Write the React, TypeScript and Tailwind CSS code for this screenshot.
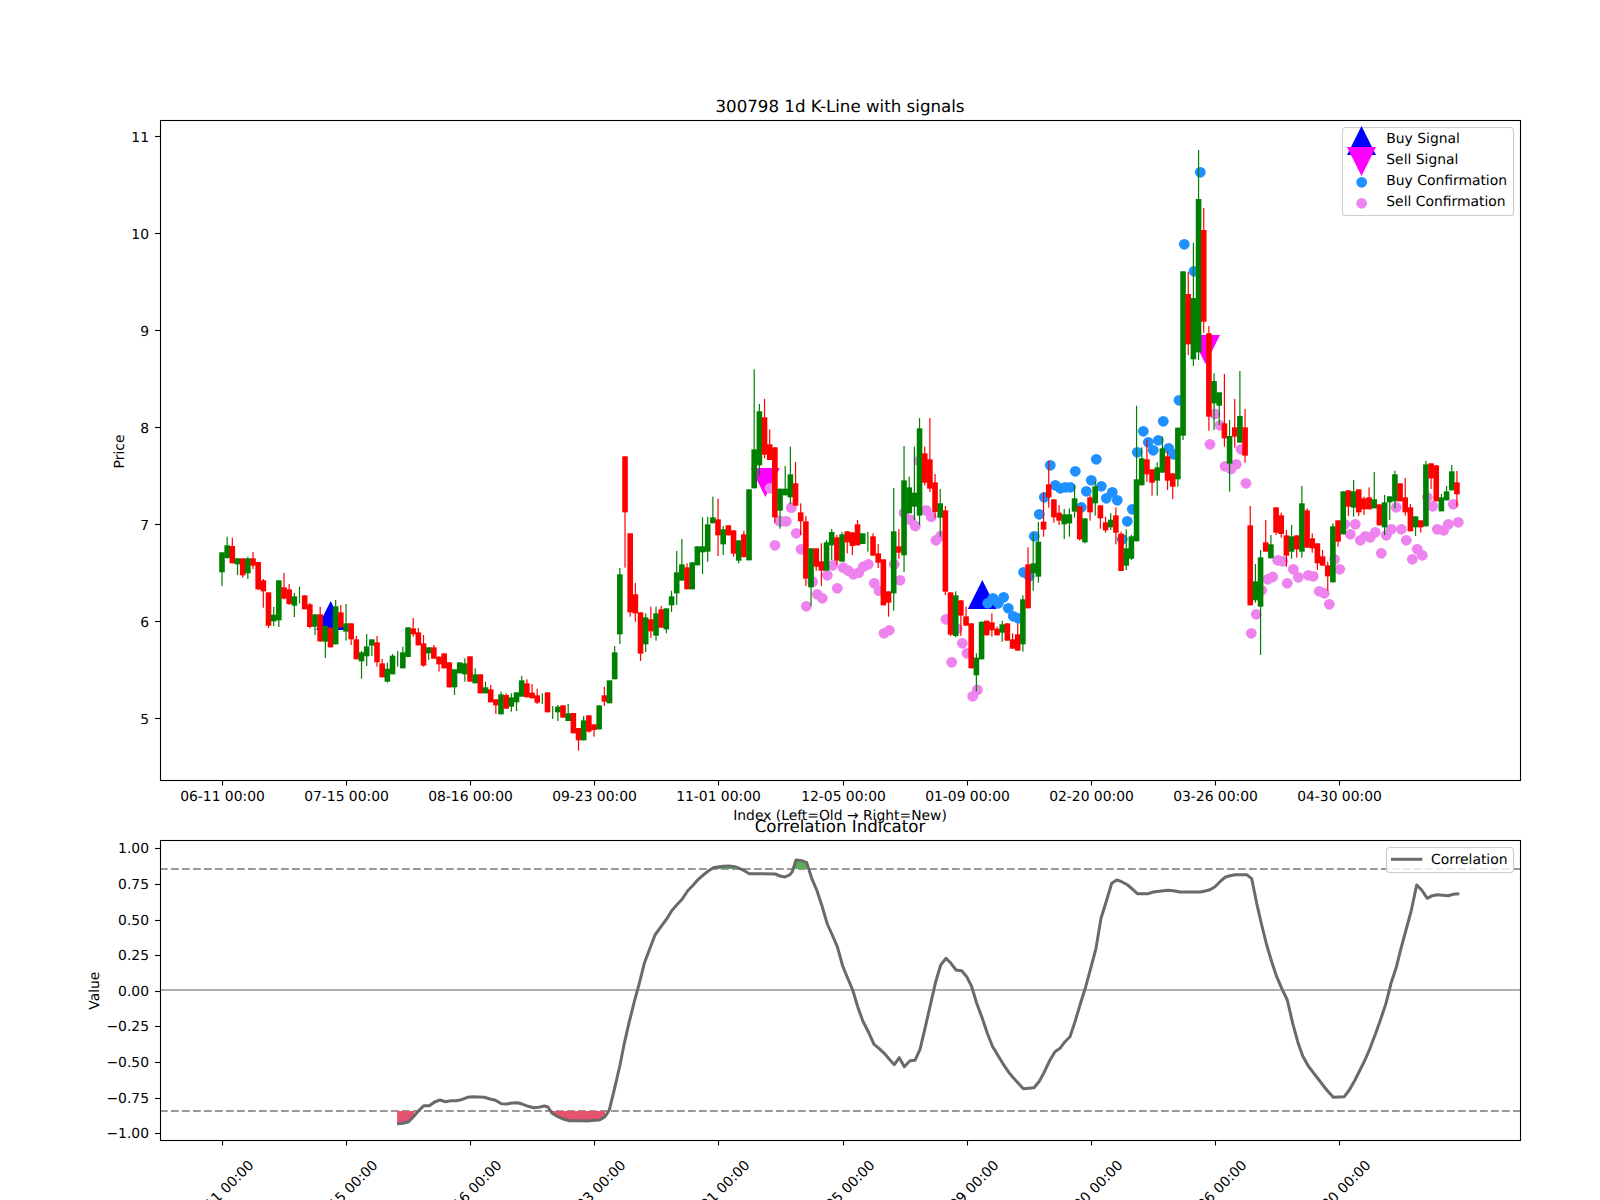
// Candle rows are [colour, bodyTop, bodyBottom, wickTop, wickBottom], 0 = wick ends at the body.
// Values are read at 3x, seg() brings them back to page pixels.
type Row = [string, number, number, number, number];

const seg = (base: number, rows: Row[]) =>
  rows.map(([c, bt, bb, wt, wb]) => ({
    up: c === "g",
    bodyTop: base + bt / 3,
    bodyBottom: base + bb / 3,
    wickTop: base + (wt || bt) / 3,
    wickBottom: base + (wb || bb) / 3,
  }));

const candles = [
  ...seg(400, [
    ["g", 457, 517, 0, 558], ["g", 436, 474, 410, 476], ["r", 438, 490, 413, 0], ["g", 475, 493, 0, 525],
    ["r", 475, 526, 0, 533], ["g", 475, 520, 470, 537], ["r", 475, 497, 456, 507], ["r", 486, 568, 0, 570],
    ["r", 541, 574, 537, 623], ["r", 577, 677, 0, 684], ["g", 644, 664, 621, 678], ["g", 541, 661, 0, 681],
    ["r", 562, 596, 519, 598], ["r", 568, 612, 552, 615], ["g", 589, 617, 579, 651], ["g", 585, 585, 560, 610],
    ["r", 586, 628, 0, 0], ["r", 613, 681, 609, 685], ["g", 643, 680, 0, 705], ["r", 643, 724, 620, 726],
    ["g", 678, 725, 0, 774], ["r", 683, 742, 0, 0], ["g", 619, 733, 600, 0], ["r", 637, 682, 615, 0],
    ["g", 670, 695, 612, 722], ["r", 670, 718, 0, 735], ["r", 718, 778, 708, 0], ["g", 757, 784, 753, 836],
    ["g", 739, 769, 702, 798], ["g", 718, 737, 0, 768], ["r", 727, 787, 708, 800], ["r", 790, 832, 777, 0],
    ["g", 806, 845, 788, 848], ["g", 767, 823, 762, 0], ["g", 775, 775, 753, 800], ["g", 757, 805, 740, 0],
    ["g", 682, 771, 0, 0], ["r", 685, 703, 654, 710], ["r", 697, 736, 684, 0], ["r", 730, 797, 705, 800],
    ["g", 742, 760, 0, 780], ["r", 742, 776, 735, 0], ["r", 770, 793, 0, 815], ["r", 760, 805, 0, 0],
    ["r", 787, 862, 0, 0], ["g", 808, 862, 0, 885], ["g", 787, 820, 0, 0],
    ["g", 790, 823, 775, 845], ["r", 769, 845, 0, 0], ["g", 823, 850, 805, 0], ["r", 823, 880, 0, 0],
    ["g", 862, 880, 845, 0], ["r", 868, 907, 855, 0], ["r", 898, 916, 0, 942], ["g", 883, 943, 875, 0],
    ["r", 885, 926, 880, 0], ["g", 892, 920, 880, 935], ["g", 877, 907, 0, 933], ["g", 841, 890, 828, 0],
    ["r", 850, 892, 838, 0], ["r", 878, 895, 852, 0], ["r", 886, 908, 866, 912], ["g", 895, 895, 880, 912],
    ["r", 877, 937, 0, 0], ["g", 935, 935, 918, 957], ["g", 920, 937, 915, 963], ["r", 916, 953, 0, 0],
    ["g", 940, 963, 912, 0], ["r", 939, 1000, 0, 0], ["r", 984, 1021, 0, 1052], ["g", 961, 1021, 948, 0],
    ["r", 946, 995, 0, 998], ["r", 973, 990, 0, 1010], ["g", 916, 988, 0, 0], ["r", 886, 905, 860, 918],
    ["g", 841, 910, 0, 0], ["g", 757, 838, 738, 0], ["g", 523, 703, 504, 732], ["r", 169, 337, 0, 503],
    ["r", 400, 637, 0, 650], ["r", 583, 640, 549, 665], ["r", 637, 761, 0, 783], ["g", 652, 733, 640, 756],
    ["r", 658, 694, 620, 714], ["g", 640, 707, 620, 722], ["r", 628, 683, 618, 0], ["g", 625, 688, 0, 700],
    ["g", 589, 616, 572, 636], ["g", 517, 580, 453, 615], ["g", 493, 542, 417, 0], ["r", 502, 568, 490, 0],
    ["g", 487, 568, 0, 0], ["g", 439, 496, 0, 0], ["g", 439, 457, 352, 522], ["g", 373, 455, 350, 485],
    ["g", 352, 370, 290, 0], ["r", 358, 406, 296, 468], ["g", 388, 433, 378, 465], ["r", 376, 406, 0, 0],
    ["r", 391, 461, 0, 470], ["g", 421, 482, 0, 490], ["r", 403, 471, 392, 473], ["g", 268, 481, 0, 0],
  ]),
  ...seg(340, [
    ["g", 328, 445, 88, 0], ["g", 214, 376, 192, 408], ["r", 232, 344, 177, 355], ["r", 313, 360, 268, 0],
    ["r", 322, 532, 0, 548], ["g", 446, 512, 0, 566], ["g", 446, 466, 378, 0], ["g", 403, 472, 320, 492],
    ["r", 430, 497, 366, 0], ["r", 517, 544, 490, 585], ["r", 544, 716, 528, 738], ["g", 625, 742, 0, 798],
    ["r", 625, 680, 0, 692], ["r", 664, 692, 610, 738], ["g", 607, 692, 600, 0], ["g", 576, 616, 567, 660],
    ["r", 592, 662, 585, 675], ["g", 583, 665, 576, 0], ["r", 574, 607, 0, 640], ["r", 577, 618, 0, 645],
    ["r", 553, 616, 540, 0], ["g", 580, 612, 0, 0], ["g", 600, 600, 576, 635], ["r", 589, 647, 580, 0],
    ["r", 640, 668, 612, 684], ["r", 658, 796, 0, 0], ["r", 754, 788, 0, 830], ["g", 574, 760, 444, 812],
    ["r", 619, 638, 567, 657], ["g", 421, 646, 318, 696], ["g", 442, 520, 410, 0], ["g", 458, 500, 320, 540],
    ["g", 265, 527, 234, 555], ["r", 340, 428, 320, 436], ["r", 358, 446, 234, 456], ["r", 427, 516, 402, 534],
    ["g", 490, 533, 447, 590], ["r", 511, 755, 498, 765], ["r", 757, 884, 0, 888], ["g", 766, 888, 754, 892],
    ["r", 781, 827, 0, 888], ["r", 829, 857, 800, 0], ["r", 850, 985, 0, 0], ["g", 953, 1006, 940, 1054],
    ["g", 845, 958, 0, 0], ["r", 842, 886, 0, 0], ["r", 847, 871, 820, 890], ["r", 866, 886, 860, 0],
    ["g", 853, 878, 842, 905], ["r", 850, 902, 0, 0], ["r", 898, 926, 880, 0], ["r", 883, 932, 850, 0],
    ["g", 778, 913, 766, 935], ["r", 673, 805, 622, 0], ["g", 670, 700, 580, 752], ["g", 605, 710, 546, 728],
    ["r", 545, 569, 457, 590], ["r", 433, 472, 362, 503], ["r", 478, 532, 0, 548], ["r", 518, 542, 495, 555],
    ["g", 523, 553, 507, 597], ["g", 523, 550, 505, 590], ["g", 475, 515, 435, 533], ["r", 499, 598, 0, 602],
    ["g", 535, 607, 0, 610], ["r", 472, 517, 465, 542], ["g", 439, 490, 423, 527], ["r", 496, 535, 0, 566],
    ["r", 547, 571, 530, 578], ["g", 539, 562, 520, 570], ["r", 526, 578, 502, 613], ["r", 581, 693, 575, 0],
    ["g", 625, 677, 568, 690], ["g", 589, 656, 585, 660], ["g", 418, 604, 197, 0], ["g", 355, 436, 322, 0],
    ["r", 358, 403, 300, 425], ["r", 388, 428, 0, 467], ["g", 382, 422, 367, 467], ["g", 325, 398, 290, 0],
    ["r", 349, 422, 335, 450], ["r", 400, 440, 0, 477], ["g", 263, 418, 0, 440],
  ]),
  ...seg(120, [
    ["g", 454, 947, 0, 960], ["r", 522, 673, 456, 705], ["g", 534, 718, 368, 738], ["g", 237, 697, 90, 720],
    ["r", 330, 605, 264, 638], ["r", 640, 890, 618, 932],
  ]),
  ...seg(340, [
    ["g", 123, 190, 100, 270], ["g", 157, 197, 0, 255], ["r", 250, 295, 102, 320], ["g", 288, 371, 240, 455],
    ["r", 262, 290, 177, 323], ["g", 228, 308, 93, 0], ["r", 262, 347, 207, 368],
  ]),
  ...seg(400, [
    ["r", 376, 616, 318, 0], ["g", 544, 601, 492, 608], ["g", 472, 620, 450, 765], ["r", 427, 455, 360, 0],
    ["g", 433, 475, 405, 0], ["r", 322, 398, 0, 405], ["r", 346, 402, 338, 413], ["r", 406, 467, 390, 500],
    ["g", 409, 455, 375, 476], ["r", 406, 448, 0, 473], ["g", 310, 455, 258, 473], ["r", 331, 443, 325, 0],
    ["r", 415, 445, 400, 458], ["r", 430, 490, 0, 510], ["r", 469, 497, 450, 0], ["r", 496, 529, 485, 572],
    ["g", 379, 547, 370, 0], ["r", 361, 425, 0, 440], ["g", 274, 403, 0, 0], ["r", 271, 320, 0, 348],
    ["g", 274, 323, 240, 350], ["r", 268, 337, 0, 348], ["r", 295, 328, 290, 345], ["r", 292, 328, 262, 0],
    ["g", 298, 325, 216, 0], ["r", 313, 376, 0, 0], ["g", 307, 382, 285, 405], ["g", 289, 307, 0, 360],
    ["g", 223, 304, 212, 325], ["r", 250, 304, 0, 0], ["r", 292, 337, 234, 347], ["r", 322, 394, 312, 0],
    ["g", 349, 382, 0, 408], ["r", 361, 382, 0, 398], ["g", 193, 379, 183, 0], ["r", 190, 235, 0, 267],
    ["r", 196, 304, 0, 0], ["g", 292, 334, 282, 0], ["g", 274, 301, 258, 0], ["g", 214, 271, 195, 0],
    ["r", 247, 283, 213, 320],
  ]),
];

const sellDots = [
  [775, 545.3], [770, 488.3], [779.3, 521], [791.3, 507.7], [781, 521.3], [786.3, 521.3], [796.3, 533.3], [801, 549.3],
  [812.7, 581.7], [817.3, 594.3], [822.3, 598.3], [806.3, 606.3], [827.3, 575.3], [832.7, 565.3], [837.3, 588.3],
  [843.3, 567.7], [848.3, 570.7], [853.3, 574.3], [858.7, 572.7], [863.3, 566.7], [868.3, 564.3], [874.3, 583.3],
  [879, 590.7], [884, 633.3], [889.3, 630.3], [894.3, 564.3], [900, 580.3], [904, 513], [910.7, 520], [915.3, 526],
  [919, 460.7], [926, 510.3], [931.3, 516.7], [936, 540.3], [940.7, 536], [946, 619.3], [957.3, 628.7], [962.3, 643.3],
  [967, 653.3], [951.7, 662.3], [977.3, 690], [972.7, 696.3], [1210, 444.3], [1215, 414], [1220, 425.3], [1225, 466.3],
  [1231, 469], [1236.3, 464.3], [1241, 449.3], [1246, 483.3], [1251.3, 633.3], [1256.3, 614.3], [1261.7, 590.3],
  [1267.7, 579.3], [1272.7, 577], [1277.7, 560.3], [1282.7, 561.3], [1287.3, 583.3], [1293.3, 569.3], [1298.3, 577.3],
  [1308.3, 575.3], [1313.3, 576.3], [1319.3, 591.3], [1324.3, 593.3], [1329.3, 604.3], [1334.7, 559.3], [1339.7, 569.3],
  [1344.7, 524.3], [1350.3, 534.3], [1355.3, 524.3], [1360.3, 540.3], [1365.3, 536.3], [1370.3, 537.3], [1375.3, 532.3],
  [1381.3, 553.3], [1386.3, 535.3], [1391.3, 529.3], [1396.3, 507.3], [1401.3, 529.3], [1406.3, 540.3], [1412.3, 559.3],
  [1417.3, 549.3], [1422.3, 555.3], [1427.3, 497.3], [1432.7, 506.3], [1437.3, 529.3], [1443.7, 530.3], [1448.3, 524.3],
  [1453.3, 504.3], [1458.3, 522.3],
];

const buyDots = [
  [987.7, 603.3], [993, 598.3], [998.3, 603.3], [1003.6, 597.3], [1008.3, 608.3], [1013.3, 616.3], [1018.3, 618.3],
  [1023.6, 572.3], [1029.2, 576.3], [1034.3, 536.3], [1039.3, 514.3], [1044.3, 497.3], [1050.3, 465.3], [1055.3, 485.3],
  [1060.3, 488.3], [1065.3, 487.3], [1070.3, 487.3], [1075.3, 471.3], [1081.3, 507.3], [1086.3, 491.3], [1091.3, 480.3],
  [1096.3, 459.3], [1101.3, 486.3], [1106.3, 498.3], [1112.3, 492.3], [1117.3, 500.3], [1122.3, 539.3], [1127.3, 521.3],
  [1132.3, 509.3], [1137.3, 452.3], [1143.3, 431.3], [1148.3, 442.3], [1153.3, 450.3], [1158.3, 440.3], [1163.3, 421.3],
  [1168.7, 448.3], [1173.7, 454.3], [1179, 400.3], [1184.3, 244.3], [1194, 271.3], [1200.3, 172.3],
];

const curve = [
  ...[
    [888, 1031], [905, 1030], [920, 1025], [935, 1009], [950, 990], [963, 977], [978, 977], [993, 966], [1008, 960],
    [1023, 965], [1038, 962], [1053, 962], [1068, 959], [1085, 952], [1100, 950], [1117, 951], [1132, 952], [1148, 957],
    [1163, 961], [1180, 971], [1195, 972], [1210, 969], [1225, 968], [1240, 973], [1255, 979], [1270, 983], [1285, 982],
    [1300, 978], [1310, 981], [1322, 1000], [1338, 1010], [1355, 1018], [1370, 1022], [1400, 1022], [1420, 1023],
    [1440, 1021], [1455, 1020], [1470, 1010], [1482, 990], [1497, 925],
  ].map(([x, y]) => [80 + x / 2.8, 780 + y / 3]),
  ...[
    [0, 855], [13, 790], [28, 725], [43, 665], [58, 610], [73, 550], [88, 510], [105, 465], [125, 437], [140, 417],
    [155, 392], [170, 375], [187, 357], [203, 332], [220, 315], [235, 298], [250, 285], [265, 273], [280, 263], [297, 260],
    [312, 259], [328, 258], [345, 260], [358, 265], [373, 272], [388, 281], [466, 282], [480, 288], [495, 291], [510, 284],
    [517, 275], [528, 240], [545, 242], [560, 248], [575, 295], [590, 330], [605, 375], [622, 432], [637, 465], [652, 500],
    [668, 558], [683, 595], [698, 630], [713, 680], [728, 722], [745, 755], [762, 793], [777, 805], [793, 820], [808, 838],
    [823, 854], [838, 833], [853, 860], [870, 842], [885, 841], [900, 808], [915, 745], [930, 680], [947, 605], [962, 555],
    [978, 535], [993, 550], [1008, 570], [1025, 572], [1040, 590], [1055, 620], [1070, 670], [1087, 715], [1102, 760],
    [1117, 798], [1133, 825], [1148, 850], [1165, 875], [1180, 893], [1195, 910], [1210, 926], [1242, 923], [1257, 905],
    [1272, 878], [1290, 840], [1305, 815], [1320, 805], [1335, 785], [1350, 770], [1365, 725], [1380, 675], [1397, 620],
    [1412, 565], [1428, 505], [1443, 415], [1460, 360], [1475, 310], [1490, 300],
  ].map(([x, y]) => [620 + x / 3, 780 + y / 3]),
  ...[
    [65, 305], [83, 315], [97, 327], [112, 341], [145, 341], [160, 336], [178, 334], [205, 331], [225, 333], [240, 336],
    [300, 336], [315, 333], [330, 329], [345, 320], [360, 305], [375, 292], [390, 287], [405, 284], [440, 284], [455, 296],
    [470, 370], [485, 435], [500, 495], [515, 545], [530, 590], [545, 625], [562, 660], [578, 730], [593, 785], [608, 828],
    [625, 858], [640, 878], [655, 897], [670, 917], [685, 935], [700, 952], [733, 950], [748, 930], [765, 900], [780, 870],
    [795, 840], [810, 805], [827, 760], [843, 715], [858, 670], [873, 610], [888, 565], [903, 505], [918, 450], [933, 395],
    [950, 315], [965, 330], [982, 355], [997, 347], [1012, 344], [1045, 347], [1060, 343], [1078, 341],
  ].map(([x, y]) => [1100 + x / 3, 780 + y / 3]),
];

const pts = (list: number[][]) => list.map(([x, y]) => `${x.toFixed(1)},${y.toFixed(1)}`).join(" ");
const p7 = (list: number[][]) => pts(list.map(([x, y]) => [80 + x / 2.8, 780 + y / 3]));
const p8 = (list: number[][]) => pts(list.map(([x, y]) => [620 + x / 3, 780 + y / 3]));

const tickX = [222.5, 346.5, 470.5, 594.5, 718.5, 843.5, 967.5, 1091.5, 1215.5, 1339.5];
const tickNames = ["06-11 00:00", "07-15 00:00", "08-16 00:00", "09-23 00:00", "11-01 00:00", "12-05 00:00", "01-09 00:00", "02-20 00:00", "03-26 00:00", "04-30 00:00"];
const priceTicks = [5, 6, 7, 8, 9, 10, 11];
const valueTicks = ["1.00", "0.75", "0.50", "0.25", "0.00", "−0.25", "−0.50", "−0.75", "−1.00"];

const candleX = (i: number) => 222 + 5.167 * i;
const priceY = (p: number) => 525.3 - (p - 7) * 97;

const Up = ({ x, top, size = 14.5 }: { x: number; top: number; size?: number }) => (
  <polygon points={`${x},${top} ${x + size},${top + 29} ${x - size},${top + 29}`} fill="#0000ff" />
);
const Down = ({ x, top, size = 14.5 }: { x: number; top: number; size?: number }) => (
  <polygon points={`${x - size},${top} ${x + size},${top} ${x},${top + 29}`} fill="#ff00ff" />
);

export default function App() {
  return (
    <div className="h-[1200px] w-[1600px] overflow-hidden bg-white">
      <svg
        width="1600"
        height="1200"
        viewBox="0 0 1600 1200"
        textRendering="geometricPrecision"
        className="block fill-black text-[13.89px] [font-family:'DejaVu_Sans',sans-serif]"
      >
        {/* price panel */}
        <text x="840" y="111.7" textAnchor="middle" className="text-[16.67px]">300798 1d K-Line with signals</text>
        <Up x={330.7} top={601} />
        <Up x={982.3} top={580} />
        <Down x={765.4} top={468} />
        <Down x={1205.5} top={335} />
        {sellDots.map(([x, y], i) => <circle key={i} cx={x} cy={y} r="5.4" fill="#ee82ee" />)}
        {buyDots.map(([x, y], i) => <circle key={i} cx={x} cy={y} r="5.4" fill="#1e90ff" />)}
        {candles.map((c, i) => {
          const color = c.up ? "#008000" : "#ff0000";
          const x = candleX(i);
          return (
            <g key={i}>
              <rect x={x - 0.6} y={c.wickTop} width="1.2" height={c.wickBottom - c.wickTop} fill={color} />
              {c.bodyBottom > c.bodyTop && (
                <rect x={x - 2.8} y={c.bodyTop} width="5.6" height={c.bodyBottom - c.bodyTop} fill={color} />
              )}
            </g>
          );
        })}
        <rect x="160.5" y="120.5" width="1360" height="660" fill="none" stroke="#000" strokeWidth="1.1" />
        {tickX.map((x, i) => (
          <g key={i}>
            <line x1={x} x2={x} y1="781" y2="785.5" stroke="#000" strokeWidth="1.1" />
            <text x={x} y="800.7" textAnchor="middle">{tickNames[i]}</text>
          </g>
        ))}
        {priceTicks.map((p) => (
          <g key={p}>
            <line x1="155" x2="160" y1={Math.round(priceY(p)) - 0.5} y2={Math.round(priceY(p)) - 0.5} stroke="#000" strokeWidth="1.1" />
            <text x="149" y={priceY(p) + 5} textAnchor="end">{p}</text>
          </g>
        ))}
        <text transform="translate(124 451.5) rotate(-90)" textAnchor="middle">Price</text>
        <text x="840" y="820" textAnchor="middle">Index (Left=Old → Right=New)</text>

        {/* legend of the price panel */}
        <rect x="1342.5" y="127.5" width="171" height="88" rx="3" fill="#ffffff" fillOpacity="0.8" stroke="#cccccc" strokeWidth="1.1" />
        <Up x={1361.5} top={126} />
        <Down x={1361.5} top={147} />
        <circle cx="1361.7" cy="182.3" r="5.4" fill="#1e90ff" />
        <circle cx="1361.7" cy="203.3" r="5.4" fill="#ee82ee" />
        <text x="1386.3" y="143">Buy Signal</text>
        <text x="1386.3" y="164">Sell Signal</text>
        <text x="1386.3" y="185">Buy Confirmation</text>
        <text x="1386.3" y="206">Sell Confirmation</text>

        {/* correlation panel */}
        <text x="840" y="831.7" textAnchor="middle" className="text-[16.67px]">Correlation Indicator</text>
        <line x1="160" x2="1520" y1="869" y2="869" stroke="#999999" strokeWidth="2" strokeDasharray="7.7 3.3" />
        <line x1="160" x2="1520" y1="1111" y2="1111" stroke="#999999" strokeWidth="2" strokeDasharray="7.7 3.3" />
        <line x1="160" x2="1520" y1="990" y2="990" stroke="#b0b0b0" strokeWidth="2" />
        <polygon fill="#e5536f" points={p7([[888, 993], [937, 993], [935, 1009], [920, 1025], [905, 1030], [888, 1031]])} />
        <polygon
          fill="#e5536f"
          points={p7([[1322, 993], [1470, 993], [1470, 1010], [1455, 1020], [1440, 1021], [1420, 1023], [1400, 1022], [1370, 1022], [1355, 1018], [1338, 1010], [1322, 1000]])}
        />
        <polygon fill="#5cad5c" points={p8([[517, 267], [565, 267], [560, 248], [545, 242], [528, 240]])} />
        <polygon fill="#5cad5c" points={p8([[275, 267], [345, 267], [328, 258], [297, 260]])} />
        <polyline points={pts(curve)} fill="none" stroke="#6a6a6a" strokeWidth="3" strokeLinejoin="round" />
        <rect x="160.5" y="840.5" width="1360" height="300" fill="none" stroke="#000" strokeWidth="1.1" />
        {tickX.map((x, i) => (
          <g key={i}>
            <line x1={x} x2={x} y1="1141" y2="1145.5" stroke="#000" strokeWidth="1.1" />
            <text transform={`translate(${x + 2} 1196) rotate(-45)`} textAnchor="middle">{tickNames[i]}</text>
          </g>
        ))}
        {valueTicks.map((v, i) => {
          const y = 848.3 + i * 35.62;
          return (
            <g key={v}>
              <line x1="155" x2="160" y1={Math.round(y) + 0.5} y2={Math.round(y) + 0.5} stroke="#000" strokeWidth="1.1" />
              <text x="149" y={y + 5} textAnchor="end">{v}</text>
            </g>
          );
        })}
        <text transform="translate(98.5 990.7) rotate(-90)" textAnchor="middle">Value</text>
        <rect x="1386.5" y="847.5" width="127" height="25" rx="3" fill="#ffffff" fillOpacity="0.8" stroke="#cccccc" strokeWidth="1.1" />
        <line x1="1391" x2="1422.3" y1="859.3" y2="859.3" stroke="#6a6a6a" strokeWidth="3" />
        <text x="1431" y="864">Correlation</text>
      </svg>
    </div>
  );
}
